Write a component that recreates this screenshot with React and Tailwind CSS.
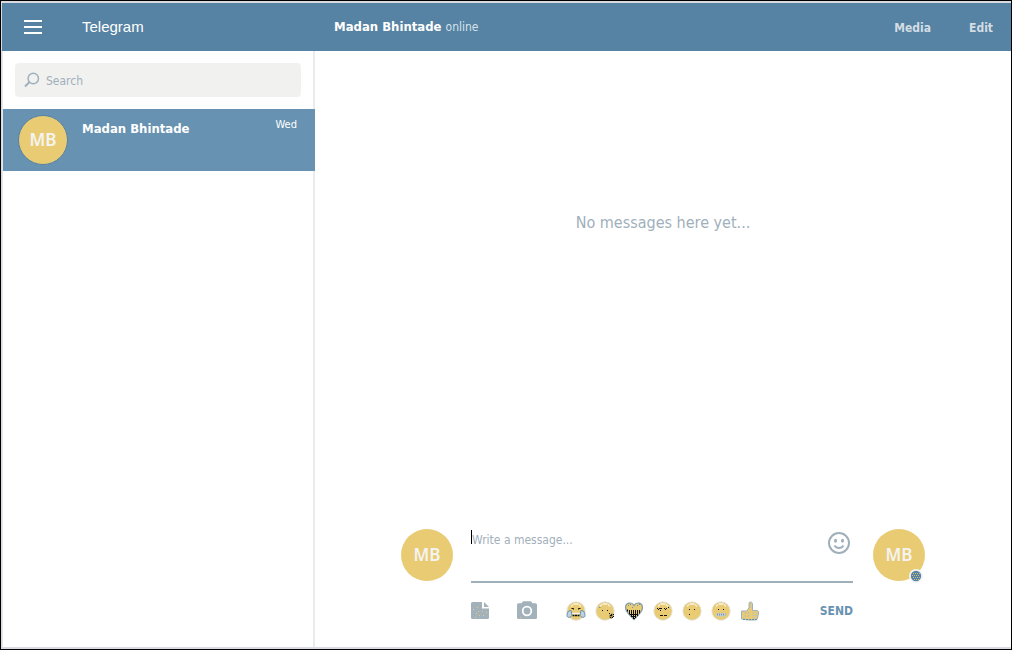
import React from "react";

const TAHOMA = "font-['DejaVu_Sans_Condensed','DejaVu_Sans',sans-serif]";

function Avatar({ className }) {
  return (
    <div
      className={`flex shrink-0 items-center justify-center rounded-full bg-[#e9cb73] font-['Noto_Sans',sans-serif] text-[17px] font-semibold text-[#f4f4f2] ${className}`}
    >
      MB
    </div>
  );
}

function Face({ children }) {
  return (
    <>
      <circle cx="10" cy="10" r="9.2" fill="#e9cb73" stroke="#e0e2e2" strokeWidth="0.8" />
      <path d="M5 5h1M6 4h1M7.500 3h5M13 4h1M14 5h1" stroke="#f9f6ea" strokeWidth="1.4" fill="none" />
      {children}
    </>
  );
}

const EMOJIS = [
  {
    label: "Face with tears of joy",
    art: (
      <Face>
        <path d="M5.500 7.500h2v1M14.500 7.500h-2v1" stroke="#111" strokeWidth="1" fill="none" />
        <path d="M6 12.500h8" stroke="#f2f2f2" strokeWidth="1.6" />
        <path d="M6.500 14.500h7" stroke="#111" strokeWidth="1.3" strokeDasharray="2 0.5" />
        <path d="M5 9.500c-3 0-4 2-4 5s4.500 2 5-.5zM15 9.500c3 0 4 2 4 5s-4.500 2-5-.5z" fill="#c3d1d8" stroke="#6792b1" strokeWidth="1" />
      </Face>
    ),
  },
  {
    label: "Face blowing a kiss",
    art: (
      <Face>
        <path d="M4 6.500h1.500" stroke="#6792b1" strokeWidth="1.2" />
        <path d="M7 9.500h1M12 9.500h1" stroke="#111" strokeWidth="1.200" />
        <path d="M14.500 13.500h2v-1h2v3l-2 2.500-2.500-1.500z" fill="#a98f45" />
        <path d="M14 12.500h1M16 13.500h1M18 13.500h1M15 14.500h2M18 15.500h1M15 16.500h1M17 16.500h1" stroke="#111" strokeWidth="1.200" />
      </Face>
    ),
  },
  {
    label: "Heart",
    art: (
      <>
        <path d="M10 18.500C7 15 1.500 11.500 1.500 6.500 1.500 1.500 8 .5 10 4.500 12 .5 18.500 1.500 18.500 6.500 18.500 11.500 13 15 10 18.500Z" fill="#e9cb73" stroke="#7f9baa" strokeWidth="1.200" />
        <path d="M3.500 8.500v2M5.500 9v4.500M7.500 9v7M9.500 9v9M11.500 9v8M13.500 9v6M15.500 9v3.500" stroke="#111" strokeWidth="1" />
        <path d="M6 13.500h8M8 15.500h4M9 17.500h2" stroke="#111" strokeWidth="1" />
        <path d="M4 4.500h1M6 3.500h1M13 4.500h1M15 3.500h1M8 6.500h1" stroke="#6792b1" strokeWidth="1" />
      </>
    ),
  },
  {
    label: "Smirking face",
    art: (
      <Face>
        <path d="M4 7.500h1M6 7.500h3M11 7.500h1M13 7.500h1M15 6.500h1M5 8.500h1M7 9.500h1M12 8.500h1" stroke="#111" strokeWidth="1.200" />
        <path d="M7 14.500h3M11 14.500h3" stroke="#111" strokeWidth="1.200" />
      </Face>
    ),
  },
  {
    label: "Slightly smiling face",
    art: (
      <Face>
        <path d="M7 8.500h1M12 8.500h1M7 13.500h1" stroke="#111" strokeWidth="1.200" />
      </Face>
    ),
  },
  {
    label: "Grimacing face",
    art: (
      <Face>
        <path d="M7 8.500h1M12 8.500h1" stroke="#111" strokeWidth="1.200" />
        <path d="M5.500 12h9v2.500l-1 1h-7l-1-1z" fill="#c3cfd4" />
        <path d="M6 13.500h8.500" stroke="#7f9baa" strokeWidth="2" strokeDasharray="1 1" />
      </Face>
    ),
  },
  {
    label: "Thumbs up",
    art: (
      <>
        <path d="M1.500 10h5L9 7V2.500Q9 1 10.500 1T12.500 2.500V9.500h5q1.300.5 1 2.500l-1 5.500q-.5 1.500-2 1.500H7q-1 0-2-1H1.500z" fill="#e9cb73" stroke="#9fb0bb" strokeWidth="1" />
        <path d="M10.500 2v6M5.500 11v6M8.500 11v5M12.500 12h5M12.500 14.500h5M12.500 17h4" stroke="#b3bfc2" strokeWidth="1.200" strokeDasharray="2 1" fill="none" />
        <path d="M3 18.500h14" stroke="#6792b1" strokeWidth="1" strokeDasharray="2 1" />
      </>
    ),
  },
];

export default function App() {
  return (
    <div className={`flex min-h-screen flex-col border border-black bg-white ${TAHOMA}`}>
      <div className="flex flex-1 flex-col border-y-2 border-l border-[#d9dbe0]">
        <header className="flex h-12 items-center bg-[#5682a3] text-white">
          <div className="flex w-[313px] shrink-0 items-center pl-[22px]">
            <button type="button" aria-label="Menu" className="flex w-[18px] flex-col gap-1">
              <span className="h-0.5 w-full bg-white" />
              <span className="h-0.5 w-full bg-white" />
              <span className="h-0.5 w-full bg-white" />
            </button>
            <h1 className="pl-10 font-['Liberation_Sans',Arial,sans-serif] text-[15px]">Telegram</h1>
          </div>
          <div className="flex flex-1 items-baseline gap-1 pl-[19px] text-xs">
            <h2 className="text-[13px] font-bold">Madan Bhintade</h2>
            <span className="text-[#d5e2ea]">online</span>
          </div>
          <nav className="flex gap-[38px] pt-0.5 pr-[18px] text-xs font-bold text-[#d3dde3]">
            <button type="button">Media</button>
            <button type="button">Edit</button>
          </nav>
        </header>

        <div className="flex flex-1">
          <aside className="w-[313px] shrink-0 border-r-2 border-l border-r-[#e9ecee] border-l-[#e6e7ea]">
            <div className="p-3">
              <label className="flex h-[34px] items-center gap-1.5 rounded-sm bg-[#f1f1f0] pl-[9px]">
                <svg className="h-4 w-4 shrink-0" viewBox="0 0 16 16" fill="none" stroke="#9fb0bb" strokeWidth="1.500">
                  <circle cx="9.300" cy="6.500" r="5.200" />
                  <path d="M5.500 10L1 14.500" strokeWidth="2" />
                </svg>
                <input
                  type="text"
                  aria-label="Search"
                  placeholder="Search"
                  className="min-w-0 flex-1 bg-transparent pt-0.5 text-xs text-[#4b5a64] outline-none placeholder:text-[#9fb0bb]"
                />
              </label>
            </div>
            <a href="#chat" className="-mr-0.5 flex h-[62px] items-start bg-[#6792b1] pt-1.5 pr-[18px] pl-[15px] text-white">
              <Avatar className="h-[50px] w-[50px] border border-[#5682a3]" />
              <span className="flex-1 pt-1 pl-3.5 text-[13px] font-bold">Madan Bhintade</span>
              <span className="pt-0.5 text-[11px]">Wed</span>
            </a>
          </aside>

          <main className="flex min-w-0 flex-1 flex-col justify-between">
            <p className="pt-40 text-center text-base text-[#9fb0bb]">No messages here yet...</p>

            <form className="mx-auto flex w-full max-w-[524px] items-start pb-[26px]">
              <Avatar className="h-[52px] w-[52px]" />
              <div className="flex min-w-0 flex-1 flex-col pr-5 pl-[18px]">
                <div className="relative flex h-[54px] items-start border-b-2 border-[#9fb0bb]">
                  <textarea
                    aria-label="Message"
                    placeholder="Write a message..."
                    className="h-12 min-w-0 flex-1 resize-none bg-transparent pt-[3px] pl-px text-xs text-[#4b5a64] outline-none placeholder:text-[#9fb0bb]"
                  />
                  <span className="absolute top-px left-0 h-3.5 w-px bg-black" />
                  <button type="button" aria-label="Insert emoji" className="pt-[3px] pr-[3px]">
                    <svg className="h-[22px] w-[22px]" viewBox="0 0 22 22" fill="none" stroke="#9fb0bb">
                      <circle cx="11" cy="11" r="10" strokeWidth="2" />
                      <path d="M6.500 13.500q1.500 2.500 4.500 2.500t4.500-2.500" strokeWidth="1.800" />
                      <ellipse cx="7.500" cy="8.800" rx="1.500" ry="2" fill="#9fb0bb" stroke="none" />
                      <ellipse cx="14.500" cy="8.800" rx="1.500" ry="2" fill="#9fb0bb" stroke="none" />
                    </svg>
                  </button>
                </div>
                <div className="flex items-center pt-[18px]">
                  <button type="button" aria-label="Send file">
                    <svg className="h-5 w-[18px]" viewBox="0 0 18 20">
                      <path d="M1.500 1H11v6.500h7V16.500q0 1.500-1.500 1.500h-15Q0 18 0 16.500v-14Q0 1 1.500 1z" fill="#a3b1ba" />
                      <path d="M13 1l5 5h-5z" fill="#a3b1ba" />
                      <path d="M2 8.500h1M6 6.500h1M7 10.500h1M11 10.500h1M15 11.500h1M5 12.500h1M8 14.500h1M12 14.500h1M4 16.500h1" stroke="#e9cb73" />
                    </svg>
                  </button>
                  <button type="button" aria-label="Send photo" className="pl-7">
                    <svg className="h-5 w-5" viewBox="0 0 20 20">
                      <path d="M6 .3h8l1.500 2H18.500q1.500 0 1.500 1.500v12.700q0 1.500-1.500 1.500h-17Q0 18 0 16.500V3.800Q0 2.300 1.500 2.300h3z" fill="#a3b1ba" />
                      <circle cx="10" cy="10" r="4.300" fill="none" stroke="#fff" strokeWidth="1.800" />
                      <path d="M3 16.500h1" stroke="#e9cb73" />
                    </svg>
                  </button>
                  <div className="flex gap-[9px] pl-[29px]">
                    {EMOJIS.map((e) => (
                      <button type="button" key={e.label} aria-label={e.label}>
                        <svg className="h-5 w-5" viewBox="0 0 20 20">{e.art}</svg>
                      </button>
                    ))}
                  </div>
                  <button type="submit" className="ml-auto text-xs font-bold text-[#6792b1]">
                    SEND
                  </button>
                </div>
              </div>
              <div className="relative">
                <Avatar className="h-[52px] w-[52px]" />
                <span className="absolute right-0.5 -bottom-0.5 h-[14px] w-[14px]">
                  <svg className="h-full w-full" viewBox="0 0 14 14">
                    <circle cx="7" cy="7" r="7" fill="#f4f4f2" />
                    <circle cx="7" cy="7" r="5.200" fill="#5682a3" />
                    <path d="M4 4.500h7M3 6.500h8M4 8.500h7M5 10.500h5" stroke="#c9bd82" strokeDasharray="1 1" />
                  </svg>
                </span>
              </div>
            </form>
          </main>
        </div>
      </div>
    </div>
  );
}
